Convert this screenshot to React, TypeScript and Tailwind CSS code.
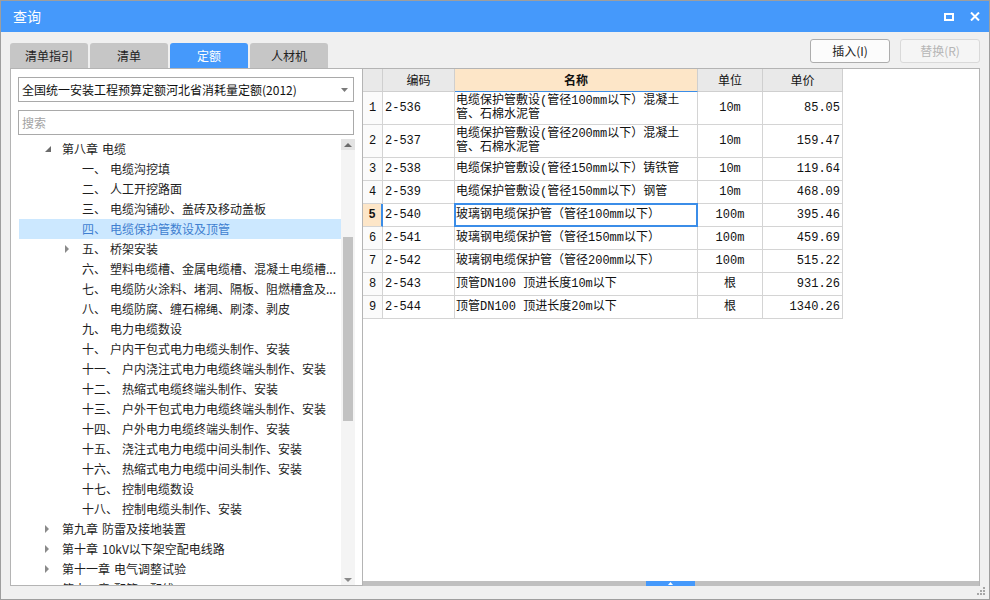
import React from 'react';

type TreeItem = {
  num: string;
  label: string;
  level: number;
  arrow?: 'open' | 'closed';
  selected?: boolean;
};

const treeItems: TreeItem[] = [
  { num: '第八章', label: '电缆', level: 0, arrow: 'open' },
  { num: '一、', label: '电缆沟挖填', level: 1 },
  { num: '二、', label: '人工开挖路面', level: 1 },
  { num: '三、', label: '电缆沟铺砂、盖砖及移动盖板', level: 1 },
  { num: '四、', label: '电缆保护管数设及顶管', level: 1, selected: true },
  { num: '五、', label: '桥架安装', level: 1, arrow: 'closed' },
  { num: '六、', label: '塑料电缆槽、金属电缆槽、混凝土电缆槽...', level: 1 },
  { num: '七、', label: '电缆防火涂料、堵洞、隔板、阻燃槽盒及...', level: 1 },
  { num: '八、', label: '电缆防腐、缠石棉绳、刷漆、剥皮', level: 1 },
  { num: '九、', label: '电力电缆数设', level: 1 },
  { num: '十、', label: '户内干包式电力电缆头制作、安装', level: 1 },
  { num: '十一、', label: '户内浇注式电力电缆终端头制作、安装', level: 1 },
  { num: '十二、', label: '热缩式电缆终端头制作、安装', level: 1 },
  { num: '十三、', label: '户外干包式电力电缆终端头制作、安装', level: 1 },
  { num: '十四、', label: '户外电力电缆终端头制作、安装', level: 1 },
  { num: '十五、', label: '浇注式电力电缆中间头制作、安装', level: 1 },
  { num: '十六、', label: '热缩式电力电缆中间头制作、安装', level: 1 },
  { num: '十七、', label: '控制电缆数设', level: 1 },
  { num: '十八、', label: '控制电缆头制作、安装', level: 1 },
  { num: '第九章', label: '防雷及接地装置', level: 0, arrow: 'closed' },
  { num: '第十章', label: '10kV以下架空配电线路', level: 0, arrow: 'closed' },
  { num: '第十一章', label: '电气调整试验', level: 0, arrow: 'closed' },
  { num: '第十二章', label: '配管、配线', level: 0, arrow: 'closed' },
];

type Row = { code: string; name: string[]; unit: string; price: string };

const rows: Row[] = [
  { code: '2-536', name: ['电缆保护管敷设(管径100mm以下）混凝土', '管、石棉水泥管'], unit: '10m', price: '85.05' },
  { code: '2-537', name: ['电缆保护管敷设(管径200mm以下）混凝土', '管、石棉水泥管'], unit: '10m', price: '159.47' },
  { code: '2-538', name: ['电缆保护管敷设(管径150mm以下）铸铁管'], unit: '10m', price: '119.64' },
  { code: '2-539', name: ['电缆保护管敷设(管径150mm以下）钢管'], unit: '10m', price: '468.09' },
  { code: '2-540', name: ['玻璃钢电缆保护管（管径100mm以下）'], unit: '100m', price: '395.46' },
  { code: '2-541', name: ['玻璃钢电缆保护管（管径150mm以下）'], unit: '100m', price: '459.69' },
  { code: '2-542', name: ['玻璃钢电缆保护管（管径200mm以下）'], unit: '100m', price: '515.22' },
  { code: '2-543', name: ['顶管DN100 顶进长度10m以下'], unit: '根', price: '931.26' },
  { code: '2-544', name: ['顶管DN100 顶进长度20m以下'], unit: '根', price: '1340.26' },
];

const tabs = ['清单指引', '清单', '定额', '人材机'];

function TreeArrow({ kind }: { kind: 'open' | 'closed' }) {
  if (kind === 'open') {
    return (
      <svg width="7" height="7" viewBox="0 0 7 7">
        <path d="M6 0 L6 6 L0 6 Z" fill="#6b6b6b" />
      </svg>
    );
  }
  return (
    <svg width="5" height="8" viewBox="0 0 5 8">
      <path d="M0 0 L4 4 L0 8 Z" fill="#8a8a8a" />
    </svg>
  );
}

function TreeRow({ item }: { item: TreeItem }) {
  const pad = item.level === 0 ? 'pl-[26px]' : 'pl-[46px]';
  return (
    <div
      className={`flex items-center h-[20px] leading-[20px] whitespace-nowrap overflow-hidden ${pad} ${
        item.selected ? 'bg-[#cce8ff] text-[#3f7fd0]' : 'text-[#1e1e1e]'
      }`}
    >
      <span className="w-[17px] flex items-center shrink-0">
        {item.arrow && <TreeArrow kind={item.arrow} />}
      </span>
      <span>{item.num}</span>
      <span className="ml-[4px]">{item.label}</span>
    </div>
  );
}

export default function App() {
  return (
    <div className="relative w-[990px] h-[600px] flex flex-col border border-[#9e9e9e] bg-[#f0f0f0] font-['Noto_Sans_CJK_SC',sans-serif] text-[12px] overflow-hidden">
      {/* title bar */}
      <div className="h-[31px] bg-[#4599fb] flex items-center justify-between pl-[12px] pr-[9px] shrink-0">
        <span className="text-white text-[14px]">查询</span>
        <div className="flex items-center gap-[16px]">
          <svg width="10" height="8" viewBox="0 0 10 8">
            <rect x="1" y="1" width="8" height="6" fill="none" stroke="#fff" strokeWidth="2" />
          </svg>
          <svg width="10" height="9" viewBox="0 0 10 9">
            <path d="M1 0.5 L9 8.5 M9 0.5 L1 8.5" stroke="#fff" strokeWidth="2" />
          </svg>
        </div>
      </div>

      <div className="flex-1 flex flex-col px-[9px] pt-[7px]">
        {/* tabs + buttons */}
        <div className="h-[29px] flex items-end justify-between shrink-0">
          <div className="flex gap-[2px]">
            {tabs.map((t) => (
              <div
                key={t}
                className={`w-[78px] h-[25px] rounded-t-[3px] flex items-center justify-center text-[12px] ${
                  t === '定额' ? 'bg-[#4599fb] text-white' : 'bg-[#c6c6c6] text-[#222]'
                }`}
              >
                {t}
              </div>
            ))}
          </div>
          <div className="flex gap-[10px] mb-[5px]">
            <button className="w-[80px] h-[24px] rounded-[3px] border border-[#adadad] bg-[#fcfcfc] text-[#222] text-[12px]">
              插入(I)
            </button>
            <button className="w-[80px] h-[24px] rounded-[3px] border border-[#d9d9d9] bg-[#f5f5f5] text-[#b5b5b5] text-[12px]">
              替换(R)
            </button>
          </div>
        </div>

        {/* panes */}
        <div className="h-[518px] flex">
          {/* left panel */}
          <div className="w-[352px] bg-white border border-r-0 border-[#b4b4b4] flex flex-col pl-[7px] pt-[8px]">
            <div className="w-[336px] h-[25px] border border-[#a9a9a9] flex items-center justify-between pl-[3px] pr-[5px] text-[#111]">
              <span>全国统一安装工程预算定额河北省消耗量定额(2012)</span>
              <svg width="7" height="4" viewBox="0 0 7 4">
                <path d="M0 0 L7 0 L3.5 4 Z" fill="#7a7a7a" />
              </svg>
            </div>
            <div className="w-[336px] h-[25px] mt-[8px] border border-[#a9a9a9] flex items-center pl-[3px] text-[#a3a3a3]">
              搜索
            </div>
            <div className="flex-1 mt-[4px] ml-[1px] w-[336px] flex overflow-hidden">
              <div className="w-[322px] overflow-hidden">
                {treeItems.map((it, i) => (
                  <TreeRow key={i} item={it} />
                ))}
              </div>
              {/* vertical scrollbar */}
              <div className="w-[14px] flex flex-col bg-[#f4f4f4]">
                <div className="h-[11px] flex items-center justify-center bg-[#e3e3e3]">
                  <svg width="8" height="4" viewBox="0 0 8 4">
                    <path d="M0 4 L8 4 L4 0 Z" fill="#6a6a6a" />
                  </svg>
                </div>
                <div className="h-[87px]" />
                <div className="h-[184px] mx-[2px] bg-[#c2c2c2]" />
                <div className="flex-1" />
                <div className="h-[11px] flex items-center justify-center">
                  <svg width="8" height="4" viewBox="0 0 8 4">
                    <path d="M0 0 L8 0 L4 4 Z" fill="#8a8a8a" />
                  </svg>
                </div>
              </div>
            </div>
          </div>

          {/* right pane */}
          <div className="w-[618px] bg-white border border-b-0 border-[#b4b4b4] flex flex-col">
            <div className="flex-1 overflow-hidden font-['Liberation_Mono','Noto_Sans_CJK_SC',monospace] text-[12px] text-[#111]">
              {/* header */}
              <div className="flex h-[23px] font-['Noto_Sans_CJK_SC',sans-serif]">
                <div className="w-[20px] bg-[#e9e9e9] border-r border-b border-[#cfcfcf]" />
                <div className="w-[72px] bg-[#e9e9e9] border-r border-b border-[#cfcfcf] flex items-center justify-center">
                  编码
                </div>
                <div className="w-[243px] bg-[#fde6c8] border-r border-b border-r-[#cfcfcf] border-b-[#3b8de8] flex items-center justify-center font-bold">
                  名称
                </div>
                <div className="w-[65px] bg-[#e9e9e9] border-r border-b border-[#cfcfcf] flex items-center justify-center">
                  单位
                </div>
                <div className="w-[80px] bg-[#e9e9e9] border-r border-b border-[#cfcfcf] flex items-center justify-center">
                  单价
                </div>
              </div>
              {rows.map((r, i) => {
                const sel = i === 4;
                const tall = r.name.length > 1;
                return (
                  <div key={r.code} className={`flex ${tall ? 'h-[33px]' : 'h-[23px]'}`}>
                    <div
                      className={`w-[20px] border-b border-[#d4d4d4] flex items-center justify-center ${
                        sel ? 'bg-[#fde6c8] font-bold border-r-2 border-r-[#3b8de8]' : 'bg-[#fbfbfb] border-r'
                      }`}
                    >
                      {i + 1}
                    </div>
                    <div className="w-[72px] border-r border-b border-[#d4d4d4] flex items-center pl-[2px]">
                      {r.code}
                    </div>
                    <div
                      className={`relative w-[243px] border-r border-b border-[#d4d4d4] pl-[1px] ${
                        tall ? 'pt-[2px] leading-[14px]' : 'flex items-center'
                      }`}
                    >
                      {tall ? (
                        r.name.map((l) => (
                          <div key={l} className="whitespace-nowrap">
                            {l}
                          </div>
                        ))
                      ) : (
                        <span className="whitespace-nowrap">{r.name[0]}</span>
                      )}
                      {sel && <div className="absolute inset-[-1px] border-2 border-[#3b8de8]" />}
                    </div>
                    <div className="w-[65px] border-r border-b border-[#d4d4d4] flex items-center justify-center">
                      {r.unit}
                    </div>
                    <div className="w-[80px] border-r border-b border-[#d4d4d4] flex items-center justify-end pr-[2px]">
                      {r.price}
                    </div>
                  </div>
                );
              })}
            </div>
            {/* bottom splitter bar */}
            <div className="h-[5px] bg-[#c0c0c0] flex">
              <div className="w-[283px]" />
              <div className="w-[49px] bg-[#4599fb] flex items-center justify-center">
                <svg width="5" height="3" viewBox="0 0 5 3">
                  <path d="M0 3 L5 3 L2.5 0 Z" fill="#fff" />
                </svg>
              </div>
            </div>
          </div>
        </div>
      </div>

      {/* resize grip */}
      <svg className="absolute right-[3px] bottom-[3px]" width="9" height="9" viewBox="0 0 9 9">
        <rect x="6" y="0" width="2" height="2" fill="#a6a6a6" />
        <rect x="3" y="3" width="2" height="2" fill="#a6a6a6" />
        <rect x="6" y="3" width="2" height="2" fill="#a6a6a6" />
        <rect x="0" y="6" width="2" height="2" fill="#a6a6a6" />
        <rect x="3" y="6" width="2" height="2" fill="#a6a6a6" />
        <rect x="6" y="6" width="2" height="2" fill="#a6a6a6" />
      </svg>
    </div>
  );
}
